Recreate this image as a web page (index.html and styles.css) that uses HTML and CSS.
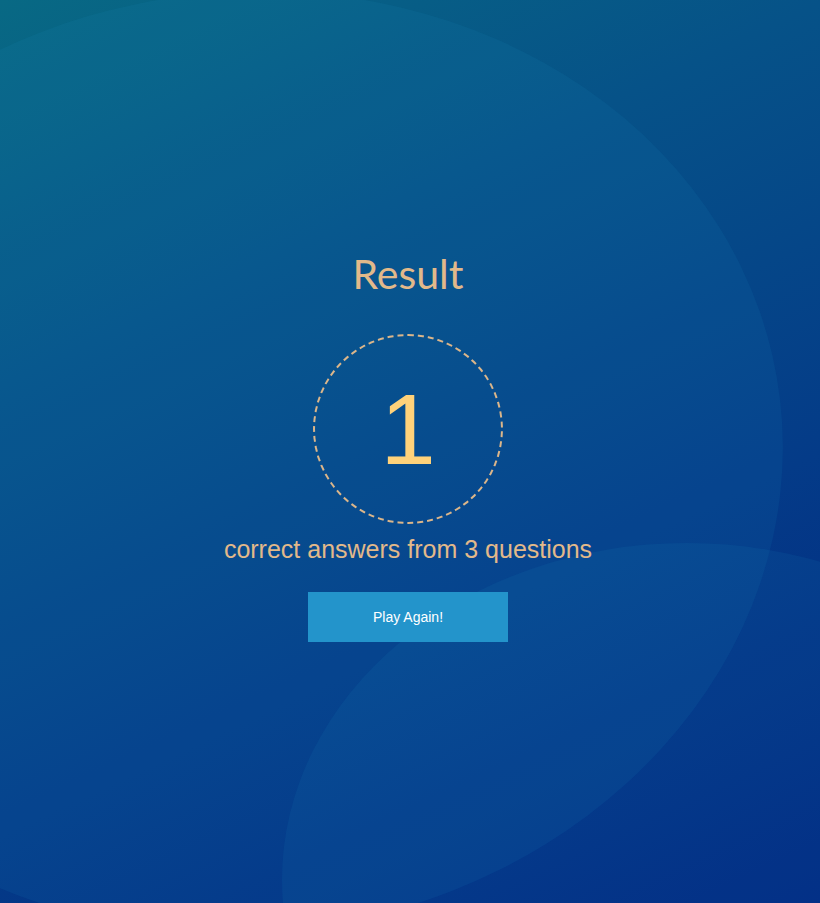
FILE: index.html
```html
<!DOCTYPE html>
<html lang="en">
<head>
<meta charset="utf-8">
<title>Result</title>
<link rel="stylesheet" href="styles.css">
</head>
<body>
<div class="bg">
  <svg class="blobs" width="820" height="903" viewBox="0 0 820 903" aria-hidden="true">
    <ellipse cx="244.7" cy="462.2" rx="539" ry="470" transform="rotate(-6.6 244.7 462.2)" fill="rgba(30,150,200,0.10)"/>
    <ellipse cx="687" cy="880" rx="405" ry="337" fill="rgba(30,150,200,0.10)"/>
  </svg>
  <main class="result">
    <h1 class="title">Result</h1>
    <div class="score-ring"><span class="score">1</span></div>
    <p class="summary">correct answers from 3 questions</p>
    <button class="again" type="button">Play Again!</button>
  </main>
</div>
</body>
</html>
```
FILE: styles.css
```css
html, body {
  margin: 0;
  padding: 0;
  width: 820px;
  height: 903px;
  overflow: hidden;
}
.bg {
  position: relative;
  width: 820px;
  height: 903px;
  background: linear-gradient(155deg, #086984 0%, #065288 30%, #043b88 65%, #012580 100%);
  overflow: hidden;
}
.blobs {
  position: absolute;
  left: 0;
  top: 0;
}
.result {
  position: relative;
  width: 816px;
  display: flex;
  flex-direction: column;
  align-items: center;
  padding-top: 250px;
}
.title {
  margin: 0;
  font-family: Lato, "Open Sans", sans-serif;
  font-weight: 400;
  font-size: 41px;
  line-height: 48px;
  color: #e2b98a;
}
.score-ring {
  margin-top: 36px;
  width: 186px;
  height: 186px;
  border: 2px dashed #dcb68a;
  border-radius: 50%;
  display: flex;
  align-items: center;
  justify-content: center;
}
.score {
  font-family: "Liberation Sans", Arial, sans-serif;
  font-size: 100px;
  line-height: 1;
  color: #ffd27a;
}
.summary {
  margin: 11px 0 0;
  font-family: "Liberation Sans", Arial, sans-serif;
  font-size: 25px;
  line-height: 28px;
  color: #e2b98a;
}
.again {
  margin-top: 29px;
  width: 200px;
  height: 50px;
  border: none;
  background: #2394cb;
  color: #ffffff;
  font-family: "Liberation Sans", Arial, sans-serif;
  font-size: 14px;
  padding: 0;
}
```
